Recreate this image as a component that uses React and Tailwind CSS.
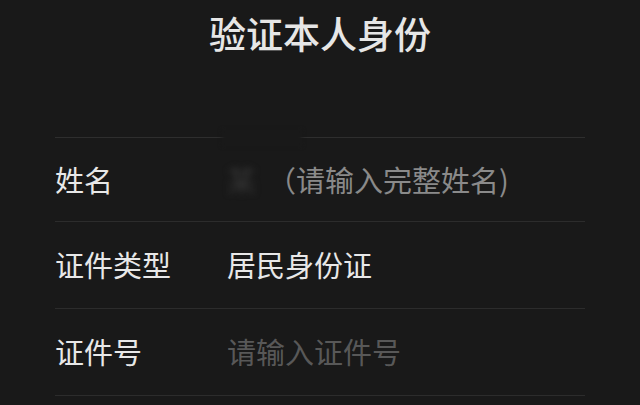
export default function App() {
  const font = { fontFamily: '"Noto Sans CJK SC", "Noto Sans", sans-serif' };
  return (
    <div className="w-[640px] h-[405px] overflow-hidden bg-[#191919]" style={font}>
      <div className="h-[137px] pt-[11px] text-center">
        <h1 className="text-[37px] leading-[44px] font-medium text-[#e6e6e6]">验证本人身份</h1>
      </div>
      <div className="relative mx-[55px] w-[530px] border-t border-[#2e2e2e]">
        <div className="absolute left-[167px] top-[-8px] w-[80px] h-[16px] bg-[#191919] blur-[2px]" />
        <div className="flex items-center h-[84px] border-b border-[#2c2c2c]">
          <div className="w-[172px] shrink-0 text-[29px] text-[#e8e8e8]">姓名</div>
          <div className="flex items-center text-[29px] text-[#8a8a8a] whitespace-nowrap">
            <span className="mr-[11px] text-[#333333] blur-[3px]">某</span>
            <span>（请输入完整姓名)</span>
          </div>
        </div>
        <div className="flex items-center h-[87px] border-b border-[#2c2c2c]">
          <div className="w-[172px] shrink-0 text-[29px] text-[#e8e8e8]">证件类型</div>
          <div className="text-[29px] text-[#e8e8e8]">居民身份证</div>
        </div>
        <div className="flex items-center h-[87px] border-b border-[#2c2c2c]">
          <div className="w-[172px] shrink-0 text-[29px] text-[#e8e8e8]">证件号</div>
          <div className="text-[29px] text-[#585858]">请输入证件号</div>
        </div>
      </div>
    </div>
  );
}
